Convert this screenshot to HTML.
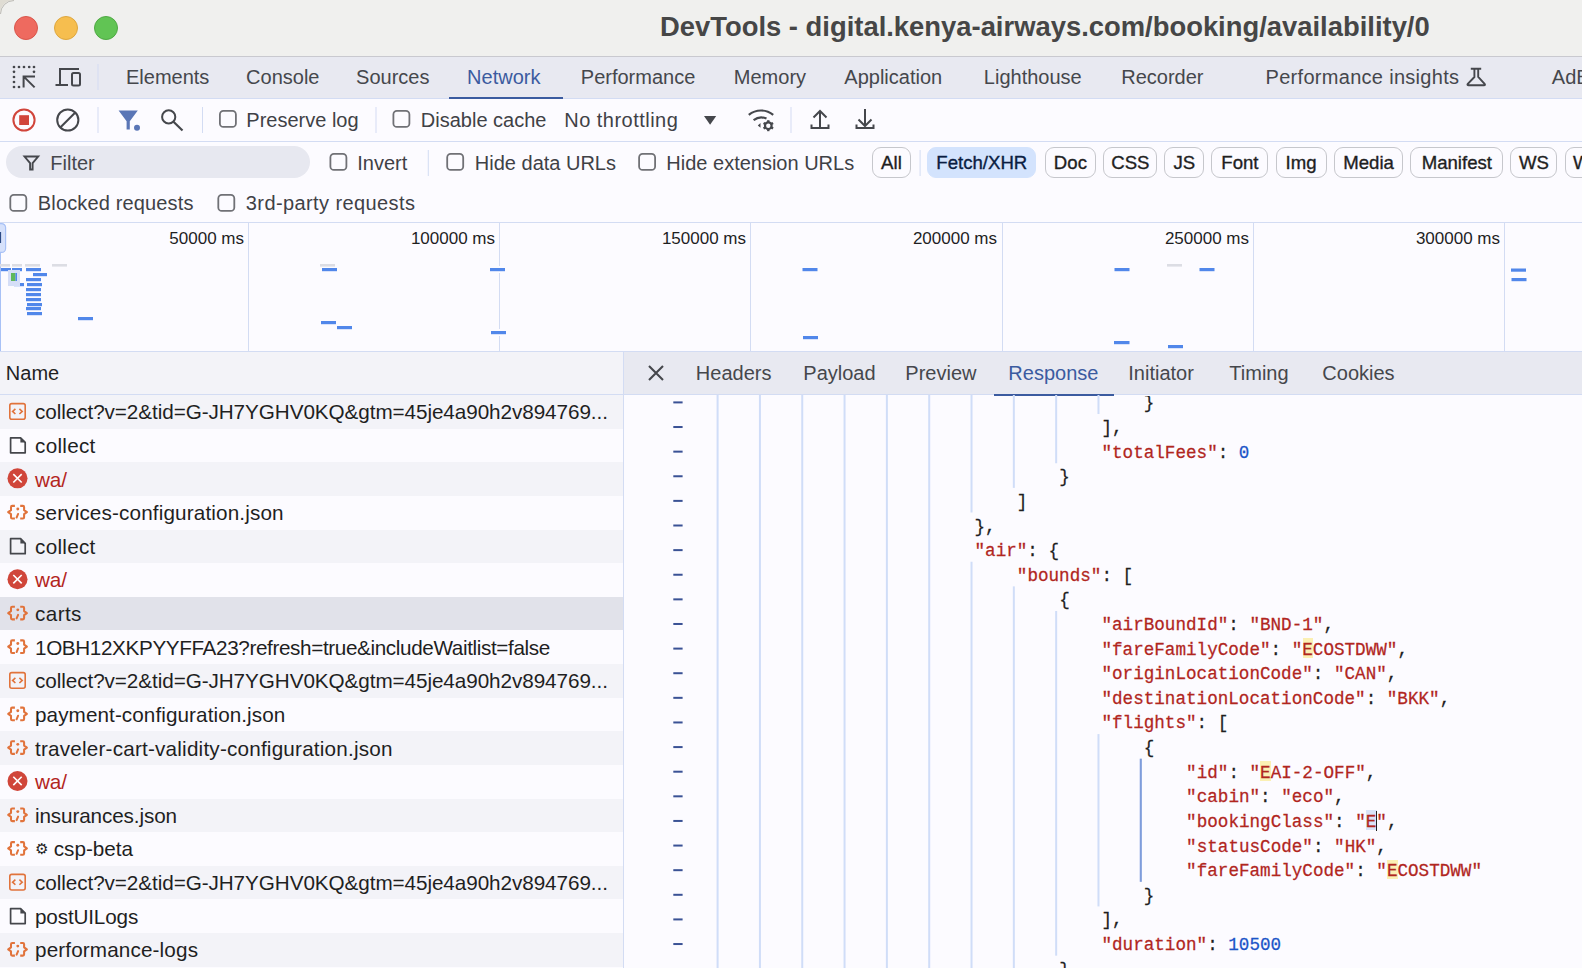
<!DOCTYPE html>
<html><head><meta charset="utf-8">
<style>
*{box-sizing:border-box;margin:0;padding:0}
html,body{width:1582px;height:968px;overflow:hidden;background:#fcfbff;font-family:"Liberation Sans",sans-serif;color:#1f1f1f;position:relative}
.a{position:absolute;white-space:nowrap}
.t{position:absolute;white-space:nowrap;font-size:20px;line-height:22px;color:#3f4146;margin-left:-1.2px}
.tab{position:absolute;top:66px;font-size:20px;line-height:22px;color:#45474c;white-space:nowrap;margin-left:-1.2px}
.pill{position:absolute;top:147px;height:31px;border:1px solid #c6c7cc;border-radius:9px;font-size:18.6px;line-height:29px;text-align:center;color:#1f1f1f;-webkit-text-stroke:0.35px #1f1f1f}
.ms{position:absolute;top:229.2px;font-size:17px;line-height:20px;color:#1f1f1f;white-space:nowrap}
.nm{position:absolute;left:35px;font-size:20.7px;line-height:22px;color:#1f1f1f;white-space:nowrap}
.ln{position:absolute;font-family:"Liberation Mono",monospace;font-size:17.63px;line-height:24px;white-space:pre;color:#1f1f1f;transform:scaleY(1.08);transform-origin:0 16.7px;-webkit-text-stroke:0.25px currentColor}
.k{color:#b1261e}
.n{color:#1b55c8}
svg{position:absolute;left:0;top:0}
</style></head><body>
<div class="a" style="left:0px;top:0px;width:1582px;height:56px;background:#f0f0ee;"></div>
<div class="a" style="left:0px;top:56px;width:1582px;height:1px;background:#c9c9cf;"></div>
<div class="a" style="left:0px;top:57px;width:1582px;height:41px;background:#e8e9f1;"></div>
<div class="a" style="left:0px;top:98px;width:1582px;height:1px;background:#d3dcf3;"></div>
<div class="a" style="left:0px;top:141px;width:1582px;height:1px;background:#d3dcf3;"></div>
<div class="a" style="left:0px;top:222px;width:1582px;height:1px;background:#d3dcf3;"></div>
<div class="a" style="left:0px;top:351px;width:1582px;height:1px;background:#d3dcf3;"></div>
<div class="a" style="left:0px;top:352px;width:623px;height:42px;background:#f3f3f8;"></div>
<div class="a" style="left:0px;top:394px;width:623px;height:1px;background:#d3dcf3;"></div>
<div class="a" style="left:624px;top:352px;width:958px;height:42px;background:#e8e9f1;"></div>
<div class="a" style="left:624px;top:394px;width:958px;height:1px;background:#d3dcf3;"></div>
<div class="a" style="left:623px;top:352px;width:1px;height:616px;background:#d3dcf3;"></div>
<div class="a" style="left:0px;top:395.0px;width:623px;height:33.62px;background:#f3f3f8;"></div>
<div class="nm" style="top:401.30px;color:#1f1f1f;letter-spacing:-0.073px">collect?v=2&amp;tid=G-JH7YGHV0KQ&amp;gtm=45je4a90h2v894769...</div>
<div class="a" style="left:0px;top:428.62px;width:623px;height:33.62px;background:#fcfbff;"></div>
<div class="nm" style="top:434.93px;color:#1f1f1f;letter-spacing:0.283px">collect</div>
<div class="a" style="left:0px;top:462.25px;width:623px;height:33.62px;background:#f3f3f8;"></div>
<div class="nm" style="top:468.55px;color:#b3261e;letter-spacing:-0.150px">wa/</div>
<div class="a" style="left:0px;top:495.88px;width:623px;height:33.62px;background:#fcfbff;"></div>
<div class="nm" style="top:502.18px;color:#1f1f1f;letter-spacing:0.142px">services-configuration.json</div>
<div class="a" style="left:0px;top:529.5px;width:623px;height:33.62px;background:#f3f3f8;"></div>
<div class="nm" style="top:535.80px;color:#1f1f1f;letter-spacing:0.283px">collect</div>
<div class="a" style="left:0px;top:563.12px;width:623px;height:33.62px;background:#fcfbff;"></div>
<div class="nm" style="top:569.42px;color:#b3261e;letter-spacing:-0.150px">wa/</div>
<div class="a" style="left:0px;top:596.75px;width:623px;height:33.62px;background:#e1e2ea;"></div>
<div class="nm" style="top:603.05px;color:#1f1f1f;letter-spacing:0.400px">carts</div>
<div class="a" style="left:0px;top:630.38px;width:623px;height:33.62px;background:#fcfbff;"></div>
<div class="nm" style="top:636.67px;color:#1f1f1f;letter-spacing:-0.374px">1OBH12XKPYYFFA23?refresh=true&amp;includeWaitlist=false</div>
<div class="a" style="left:0px;top:664.0px;width:623px;height:33.62px;background:#f3f3f8;"></div>
<div class="nm" style="top:670.30px;color:#1f1f1f;letter-spacing:-0.073px">collect?v=2&amp;tid=G-JH7YGHV0KQ&amp;gtm=45je4a90h2v894769...</div>
<div class="a" style="left:0px;top:697.62px;width:623px;height:33.62px;background:#fcfbff;"></div>
<div class="nm" style="top:703.92px;color:#1f1f1f;letter-spacing:0.076px">payment-configuration.json</div>
<div class="a" style="left:0px;top:731.25px;width:623px;height:33.62px;background:#f3f3f8;"></div>
<div class="nm" style="top:737.55px;color:#1f1f1f;letter-spacing:0.200px">traveler-cart-validity-configuration.json</div>
<div class="a" style="left:0px;top:764.88px;width:623px;height:33.62px;background:#fcfbff;"></div>
<div class="nm" style="top:771.17px;color:#b3261e;letter-spacing:-0.150px">wa/</div>
<div class="a" style="left:0px;top:798.5px;width:623px;height:33.62px;background:#f3f3f8;"></div>
<div class="nm" style="top:804.80px;color:#1f1f1f;letter-spacing:-0.121px">insurances.json</div>
<div class="a" style="left:0px;top:832.12px;width:623px;height:33.62px;background:#fcfbff;"></div>
<div class="nm" style="top:838.42px;color:#1f1f1f;letter-spacing:0.000px"><span style="font-size:15px;position:relative;top:-2px">&#9881;</span> csp-beta</div>
<div class="a" style="left:0px;top:865.75px;width:623px;height:33.62px;background:#f3f3f8;"></div>
<div class="nm" style="top:872.05px;color:#1f1f1f;letter-spacing:-0.073px">collect?v=2&amp;tid=G-JH7YGHV0KQ&amp;gtm=45je4a90h2v894769...</div>
<div class="a" style="left:0px;top:899.38px;width:623px;height:33.62px;background:#fcfbff;"></div>
<div class="nm" style="top:905.67px;color:#1f1f1f;letter-spacing:-0.156px">postUILogs</div>
<div class="a" style="left:0px;top:933.0px;width:623px;height:33.62px;background:#f3f3f8;"></div>
<div class="nm" style="top:939.30px;color:#1f1f1f;letter-spacing:0.133px">performance-logs</div>
<div class="a" style="left:14px;top:16px;width:24px;height:24px;border-radius:50%;background:#ee6a5f;border:1px solid #d9564b"></div>
<div class="a" style="left:54px;top:16px;width:24px;height:24px;border-radius:50%;background:#f6be4f;border:1px solid #dea73f"></div>
<div class="a" style="left:94px;top:16px;width:24px;height:24px;border-radius:50%;background:#61c454;border:1px solid #4fa944"></div>
<div class="a" style="left:660px;top:11px;font-size:27.4px;line-height:32px;font-weight:bold;color:#464646">DevTools - digital.kenya-airways.com/booking/availability/0</div>
<div class="tab" style="left:127.2px">Elements</div>
<div class="tab" style="left:247.3px">Console</div>
<div class="tab" style="left:357.3px">Sources</div>
<div class="tab" style="left:468.3px;color:#3b5ba0">Network</div>
<div class="tab" style="left:582.0px">Performance</div>
<div class="tab" style="left:735.0px">Memory</div>
<div class="tab" style="left:845.5px">Application</div>
<div class="tab" style="left:985.0px">Lighthouse</div>
<div class="tab" style="left:1122.4px">Recorder</div>
<div class="tab" style="left:1266.7px;letter-spacing:0.3px">Performance insights</div>
<div class="tab" style="left:1553.0px">AdB</div>
<div class="a" style="left:449px;top:96.8px;width:114px;height:2.2px;background:#3b5ba0;"></div>
<div class="t" style="left:247.5px;top:108.5px">Preserve log</div>
<div class="t" style="left:422px;top:108.5px">Disable cache</div>
<div class="t" style="left:565.5px;top:108.5px;letter-spacing:0.47px">No throttling</div>
<div class="a" style="left:6px;top:146px;width:304px;height:32px;border-radius:16px;background:#e7e8f0"></div>
<div class="t" style="left:51.5px;top:151.5px;color:#45474c">Filter</div>
<div class="t" style="left:358.5px;top:151.5px">Invert</div>
<div class="t" style="left:476px;top:151.5px">Hide data URLs</div>
<div class="t" style="left:667.5px;top:151.5px">Hide extension URLs</div>
<div class="pill" style="left:871.6px;width:39.7px">All</div>
<div class="pill" style="left:927.2px;width:109.2px;background:#d3e3fd;border-color:#d3e3fd;color:#0a1d42;-webkit-text-stroke-color:#0a1d42">Fetch/XHR</div>
<div class="pill" style="left:1044.5px;width:51.8px">Doc</div>
<div class="pill" style="left:1103.4px;width:53.9px">CSS</div>
<div class="pill" style="left:1164.3px;width:40.0px">JS</div>
<div class="pill" style="left:1211.3px;width:57.2px">Font</div>
<div class="pill" style="left:1275.6px;width:51.0px">Img</div>
<div class="pill" style="left:1333.7px;width:69.8px">Media</div>
<div class="pill" style="left:1410.3px;width:93.1px">Manifest</div>
<div class="pill" style="left:1510.4px;width:47.1px">WS</div>
<div class="pill" style="left:1564.6px;width:135.4px">WebAssembly</div>
<div class="t" style="left:39px;top:191.5px;letter-spacing:0.15px">Blocked requests</div>
<div class="t" style="left:247px;top:191.5px;letter-spacing:0.4px">3rd-party requests</div>
<div class="a" style="left:248px;top:223px;width:1px;height:128px;background:#d3dcf3;"></div>
<div class="ms" style="right:1338.0px">50000 ms</div>
<div class="a" style="left:499px;top:223px;width:1px;height:128px;background:#d3dcf3;"></div>
<div class="ms" style="right:1087.0px">100000 ms</div>
<div class="a" style="left:750px;top:223px;width:1px;height:128px;background:#d3dcf3;"></div>
<div class="ms" style="right:836.0px">150000 ms</div>
<div class="a" style="left:1002px;top:223px;width:1px;height:128px;background:#d3dcf3;"></div>
<div class="ms" style="right:585.0px">200000 ms</div>
<div class="a" style="left:1253px;top:223px;width:1px;height:128px;background:#d3dcf3;"></div>
<div class="ms" style="right:333.0px">250000 ms</div>
<div class="a" style="left:1504px;top:223px;width:1px;height:128px;background:#d3dcf3;"></div>
<div class="ms" style="right:82.0px">300000 ms</div>
<div class="tab" style="top:361.5px;left:697.0px">Headers</div>
<div class="tab" style="top:361.5px;left:804.5px">Payload</div>
<div class="tab" style="top:361.5px;left:906.5px">Preview</div>
<div class="tab" style="top:361.5px;left:1009.5px;color:#3b5ba0">Response</div>
<div class="tab" style="top:361.5px;left:1129.5px">Initiator</div>
<div class="tab" style="top:361.5px;left:1230.5px">Timing</div>
<div class="tab" style="top:361.5px;left:1323.5px">Cookies</div>
<div class="a" style="left:994px;top:393.8px;width:120px;height:2.2px;background:#3b5ba0;"></div>
<div class="t" style="left:7px;top:361.5px;color:#1f1f1f">Name</div>
<div class="a" style="left:624px;top:396px;width:958px;height:572px;overflow:hidden">
<div class="a" style="left:678.50px;top:242.10px;width:10.58px;height:19.8px;background:#fbf0b4"></div>
<div class="a" style="left:636.18px;top:365.20px;width:10.58px;height:19.8px;background:#fbf0b4"></div>
<div class="a" style="left:741.98px;top:414.44px;width:10.58px;height:19.8px;background:#d9e3f8"></div>
<div class="a" style="left:751.96px;top:414.84px;width:1.4px;height:20px;background:#1f1f1f;z-index:5"></div>
<div class="a" style="left:763.14px;top:463.68px;width:10.58px;height:19.8px;background:#fbf0b4"></div>
<div class="ln" style="left:519.80px;top:-4.60px">}</div>
<div class="ln" style="left:477.48px;top:20.02px">],</div>
<div class="ln" style="left:477.48px;top:44.64px"><span class="k">&quot;totalFees&quot;</span>: <span class="n">0</span></div>
<div class="ln" style="left:435.16px;top:69.26px">}</div>
<div class="ln" style="left:392.84px;top:93.88px">]</div>
<div class="ln" style="left:350.52px;top:118.50px">},</div>
<div class="ln" style="left:350.52px;top:143.12px"><span class="k">&quot;air&quot;</span>: {</div>
<div class="ln" style="left:392.84px;top:167.74px"><span class="k">&quot;bounds&quot;</span>: [</div>
<div class="ln" style="left:435.16px;top:192.36px">{</div>
<div class="ln" style="left:477.48px;top:216.98px"><span class="k">&quot;airBoundId&quot;</span>: <span class="k">&quot;BND-1&quot;</span>,</div>
<div class="ln" style="left:477.48px;top:241.60px"><span class="k">&quot;fareFamilyCode&quot;</span>: <span class="k">&quot;ECOSTDWW&quot;</span>,</div>
<div class="ln" style="left:477.48px;top:266.22px"><span class="k">&quot;originLocationCode&quot;</span>: <span class="k">&quot;CAN&quot;</span>,</div>
<div class="ln" style="left:477.48px;top:290.84px"><span class="k">&quot;destinationLocationCode&quot;</span>: <span class="k">&quot;BKK&quot;</span>,</div>
<div class="ln" style="left:477.48px;top:315.46px"><span class="k">&quot;flights&quot;</span>: [</div>
<div class="ln" style="left:519.80px;top:340.08px">{</div>
<div class="ln" style="left:562.12px;top:364.70px"><span class="k">&quot;id&quot;</span>: <span class="k">&quot;EAI-2-OFF&quot;</span>,</div>
<div class="ln" style="left:562.12px;top:389.32px"><span class="k">&quot;cabin&quot;</span>: <span class="k">&quot;eco&quot;</span>,</div>
<div class="ln" style="left:562.12px;top:413.94px"><span class="k">&quot;bookingClass&quot;</span>: <span class="k">&quot;E&quot;</span>,</div>
<div class="ln" style="left:562.12px;top:438.56px"><span class="k">&quot;statusCode&quot;</span>: <span class="k">&quot;HK&quot;</span>,</div>
<div class="ln" style="left:562.12px;top:463.18px"><span class="k">&quot;fareFamilyCode&quot;</span>: <span class="k">&quot;ECOSTDWW&quot;</span></div>
<div class="ln" style="left:519.80px;top:487.80px">}</div>
<div class="ln" style="left:477.48px;top:512.42px">],</div>
<div class="ln" style="left:477.48px;top:537.04px"><span class="k">&quot;duration&quot;</span>: <span class="n">10500</span></div>
<div class="ln" style="left:435.16px;top:561.66px">}</div>
</div>
<svg width="1582" height="968" viewBox="0 0 1582 968" style="pointer-events:none"><g fill="#45474c"><circle cx="14" cy="67" r="1.35"/><circle cx="19" cy="67" r="1.35"/><circle cx="24" cy="67" r="1.35"/><circle cx="29.2" cy="67" r="1.35"/><circle cx="34" cy="67" r="1.35"/><circle cx="34" cy="71.8" r="1.35"/><circle cx="14" cy="71.8" r="1.35"/><circle cx="14" cy="77" r="1.35"/><circle cx="14" cy="82" r="1.35"/><circle cx="14" cy="87" r="1.35"/><circle cx="19" cy="87" r="1.35"/></g><path d="M23.6 87.5V76.4H35M24.3 77.1L34.6 87.4" fill="none" stroke="#45474c" stroke-width="2"/><path d="M79 69H60V85M55.5 85H68" fill="none" stroke="#45474c" stroke-width="2"/><rect x="72" y="73" width="8" height="12.5" rx="1.5" fill="none" stroke="#45474c" stroke-width="2"/><rect x="97.5" y="64" width="1" height="26" fill="#d3dcf3"/><rect x="97.5" y="107" width="1" height="26" fill="#d3dcf3"/><rect x="202" y="107" width="1" height="26" fill="#d3dcf3"/><rect x="375.5" y="107" width="1" height="26" fill="#d3dcf3"/><rect x="790.5" y="107" width="1" height="26" fill="#d3dcf3"/><rect x="427.8" y="150" width="1" height="26" fill="#d3dcf3"/><rect x="919.6" y="150" width="1" height="26" fill="#d3dcf3"/><circle cx="24" cy="120" r="10.6" fill="none" stroke="#d1453b" stroke-width="2"/><rect x="19.2" y="115.2" width="9.8" height="9.8" fill="#d1453b"/><circle cx="67.8" cy="120" r="10.6" fill="none" stroke="#45474c" stroke-width="2"/><path d="M75.3 112.5L60.3 127.5" stroke="#45474c" stroke-width="2"/><path d="M118.6 110.4H137.8L129.8 121.3V129.4H126.6V121.3Z" fill="#5a76b6"/><circle cx="137" cy="127.8" r="3" fill="#5a76b6"/><circle cx="168.7" cy="116.9" r="6.6" fill="none" stroke="#45474c" stroke-width="2"/><path d="M173.5 121.7L182.5 130.5" stroke="#45474c" stroke-width="2.2"/><rect x="219.9" y="110.9" width="16" height="16" rx="3.5" fill="none" stroke="#707176" stroke-width="1.8"/><rect x="393.4" y="110.9" width="16" height="16" rx="3.5" fill="none" stroke="#707176" stroke-width="1.8"/><rect x="330.4" y="153.9" width="16" height="16" rx="3.5" fill="none" stroke="#707176" stroke-width="1.8"/><rect x="447.2" y="153.9" width="16" height="16" rx="3.5" fill="none" stroke="#707176" stroke-width="1.8"/><rect x="639.1" y="153.9" width="16" height="16" rx="3.5" fill="none" stroke="#707176" stroke-width="1.8"/><rect x="10.3" y="194.9" width="16" height="16" rx="3.5" fill="none" stroke="#707176" stroke-width="1.8"/><rect x="218.3" y="194.9" width="16" height="16" rx="3.5" fill="none" stroke="#707176" stroke-width="1.8"/><path d="M704 116H716.2L710.1 124.8Z" fill="#45474c"/><path d="M748.8 114.8A19.4 19.4 0 0 1 773.2 114.8M753.6 120.2A12.9 12.9 0 0 1 766.5 118.6" fill="none" stroke="#45474c" stroke-width="2.2"/><path d="M760.5 123L757.8 125.4L760.5 127.8Z" fill="#45474c"/><circle cx="768.3" cy="125.7" r="3.3" fill="none" stroke="#45474c" stroke-width="2.2"/><rect x="767.1" y="120.2" width="2.4" height="2.2" fill="#45474c" transform="rotate(0 768.3 125.7)"/><rect x="767.1" y="120.2" width="2.4" height="2.2" fill="#45474c" transform="rotate(60 768.3 125.7)"/><rect x="767.1" y="120.2" width="2.4" height="2.2" fill="#45474c" transform="rotate(120 768.3 125.7)"/><rect x="767.1" y="120.2" width="2.4" height="2.2" fill="#45474c" transform="rotate(180 768.3 125.7)"/><rect x="767.1" y="120.2" width="2.4" height="2.2" fill="#45474c" transform="rotate(240 768.3 125.7)"/><rect x="767.1" y="120.2" width="2.4" height="2.2" fill="#45474c" transform="rotate(300 768.3 125.7)"/><path d="M820 129V111M813.5 117.5L820 111L826.5 117.5M811.5 124.5V128H828.5V124.5" fill="none" stroke="#45474c" stroke-width="2"/><path d="M865 109V126M858.5 119.5L865 126L871.5 119.5M856.5 124.5V128H873.5V124.5" fill="none" stroke="#45474c" stroke-width="2"/><path d="M24.5 156.5H38.2L32.6 163.2V169.5H30.1V163.2Z" fill="none" stroke="#45474c" stroke-width="1.9" stroke-linejoin="miter"/><path d="M1470.8 68.8H1481.2M1474.4 69V77L1467.6 84.2Q1467 85.2 1468.5 85.2H1484Q1485.5 85.2 1484.8 84.2L1478.2 77V69" fill="none" stroke="#45474c" stroke-width="1.9"/><path d="M649 366L663 380M663 366L649 380" stroke="#45474c" stroke-width="2.1"/><rect x="0" y="223" width="1" height="128" fill="#a8c1f6"/><rect x="-8" y="223.6" width="13.6" height="28.8" rx="4" fill="#d6e1fb" stroke="#a8c1f6" stroke-width="1.2"/><rect x="0" y="232" width="1.1" height="11" fill="#2c4a85"/><rect x="320" y="266" width="19" height="7" fill="#fcfbff"/><rect x="319" y="319" width="19" height="7" fill="#fcfbff"/><rect x="335" y="324" width="19" height="7" fill="#fcfbff"/><rect x="488" y="266" width="19" height="7" fill="#fcfbff"/><rect x="489" y="329" width="19" height="7" fill="#fcfbff"/><rect x="800.5" y="266" width="19" height="7" fill="#fcfbff"/><rect x="801" y="334" width="19" height="7" fill="#fcfbff"/><rect x="1112.5" y="266" width="19" height="7" fill="#fcfbff"/><rect x="1112" y="339" width="19.5" height="7" fill="#fcfbff"/><rect x="1197.5" y="266" width="19" height="7" fill="#fcfbff"/><rect x="1166" y="343" width="19" height="7" fill="#fcfbff"/><rect x="1509" y="266.5" width="19" height="7" fill="#fcfbff"/><rect x="1509.5" y="276" width="19" height="7" fill="#fcfbff"/><rect x="1" y="268" width="10" height="3.2" fill="#5187ea"/><rect x="12" y="268" width="10" height="3.2" fill="#5187ea"/><rect x="26" y="268" width="15" height="3.2" fill="#5187ea"/><rect x="33" y="273" width="14" height="3.2" fill="#5187ea"/><rect x="26" y="278" width="15" height="3.2" fill="#5187ea"/><rect x="27" y="283" width="15" height="3.2" fill="#5187ea"/><rect x="14" y="283" width="10" height="3.2" fill="#5187ea"/><rect x="26" y="288" width="15" height="3.2" fill="#5187ea"/><rect x="26" y="293" width="15" height="3.2" fill="#5187ea"/><rect x="26" y="298" width="15" height="3.2" fill="#5187ea"/><rect x="27" y="303" width="15" height="3.2" fill="#5187ea"/><rect x="26" y="307" width="15" height="3.2" fill="#5187ea"/><rect x="27" y="312" width="15" height="3.2" fill="#5187ea"/><rect x="78" y="317" width="15" height="3.2" fill="#5187ea"/><rect x="322" y="268" width="15" height="3.2" fill="#5187ea"/><rect x="321" y="321" width="15" height="3.2" fill="#5187ea"/><rect x="337" y="326" width="15" height="3.2" fill="#5187ea"/><rect x="490" y="268" width="15" height="3.2" fill="#5187ea"/><rect x="491" y="331" width="15" height="3.2" fill="#5187ea"/><rect x="802.5" y="268" width="15" height="3.2" fill="#5187ea"/><rect x="803" y="336" width="15" height="3.2" fill="#5187ea"/><rect x="1114.5" y="268" width="15" height="3.2" fill="#5187ea"/><rect x="1114" y="341" width="15.5" height="3.2" fill="#5187ea"/><rect x="1199.5" y="268" width="15" height="3.2" fill="#5187ea"/><rect x="1168" y="345" width="15" height="3.2" fill="#5187ea"/><rect x="1511" y="268.5" width="15" height="3.2" fill="#5187ea"/><rect x="1511.5" y="278" width="15" height="3.2" fill="#5187ea"/><rect x="0" y="264" width="10" height="2.6" fill="#dcdde4"/><rect x="12" y="264" width="10" height="2.6" fill="#dcdde4"/><rect x="25" y="264" width="15" height="2.6" fill="#dcdde4"/><rect x="52" y="264" width="15" height="2.6" fill="#dcdde4"/><rect x="320" y="264" width="15" height="2.6" fill="#dcdde4"/><rect x="1167" y="264" width="15" height="2.6" fill="#dcdde4"/><rect x="8" y="270" width="12" height="16" fill="#d5def7"/><rect x="11" y="273" width="4.5" height="8" fill="#5fb85b"/><rect x="15.5" y="273" width="1.5" height="8" fill="#5187ea"/><rect x="9.8" y="403.60" width="15.4" height="15.6" rx="2" fill="none" stroke="#e1733b" stroke-width="1.6"/><path d="M15.4 408.80L12.6 411.40L15.4 414.00M19.4 408.80L22.2 411.40L19.4 414.00" fill="none" stroke="#e1733b" stroke-width="1.6"/><path d="M10.6 437.82H20.6L25.2 442.43V452.82H10.6Z" fill="none" stroke="#45474c" stroke-width="1.7" stroke-linejoin="round"/><path d="M20.4 437.62L25.4 442.62H20.4Z" fill="#45474c"/><circle cx="17.5" cy="478.35" r="10" fill="#d0463a"/><path d="M13.3 474.15L21.7 482.55M21.7 474.15L13.3 482.55" stroke="#fff" stroke-width="1.6"/><path d="M14.9 505.87H12.2Q11 505.87 11 507.17V510.17L8.2 512.17L11 514.17V517.17Q11 518.47 12.2 518.47H14.9" fill="none" stroke="#e1733b" stroke-width="2.05" stroke-linejoin="round"/><path d="M20.2 505.87H22.9Q24.1 505.87 24.1 507.17V510.17L26.9 512.17L24.1 514.17V517.17Q24.1 518.47 22.9 518.47H20.2" fill="none" stroke="#e1733b" stroke-width="2.05" stroke-linejoin="round"/><circle cx="17.8" cy="508.97" r="1.45" fill="#e1733b"/><path d="M18.1 513.97L16.6 517.57" stroke="#e1733b" stroke-width="2" stroke-linecap="round"/><path d="M10.6 538.70H20.6L25.2 543.30V553.70H10.6Z" fill="none" stroke="#45474c" stroke-width="1.7" stroke-linejoin="round"/><path d="M20.4 538.50L25.4 543.50H20.4Z" fill="#45474c"/><circle cx="17.5" cy="579.23" r="10" fill="#d0463a"/><path d="M13.3 575.02L21.7 583.42M21.7 575.02L13.3 583.42" stroke="#fff" stroke-width="1.6"/><path d="M14.9 606.75H12.2Q11 606.75 11 608.05V611.05L8.2 613.05L11 615.05V618.05Q11 619.35 12.2 619.35H14.9" fill="none" stroke="#e1733b" stroke-width="2.05" stroke-linejoin="round"/><path d="M20.2 606.75H22.9Q24.1 606.75 24.1 608.05V611.05L26.9 613.05L24.1 615.05V618.05Q24.1 619.35 22.9 619.35H20.2" fill="none" stroke="#e1733b" stroke-width="2.05" stroke-linejoin="round"/><circle cx="17.8" cy="609.85" r="1.45" fill="#e1733b"/><path d="M18.1 614.85L16.6 618.45" stroke="#e1733b" stroke-width="2" stroke-linecap="round"/><path d="M14.9 640.38H12.2Q11 640.38 11 641.67V644.67L8.2 646.67L11 648.67V651.67Q11 652.97 12.2 652.97H14.9" fill="none" stroke="#e1733b" stroke-width="2.05" stroke-linejoin="round"/><path d="M20.2 640.38H22.9Q24.1 640.38 24.1 641.67V644.67L26.9 646.67L24.1 648.67V651.67Q24.1 652.97 22.9 652.97H20.2" fill="none" stroke="#e1733b" stroke-width="2.05" stroke-linejoin="round"/><circle cx="17.8" cy="643.47" r="1.45" fill="#e1733b"/><path d="M18.1 648.47L16.6 652.07" stroke="#e1733b" stroke-width="2" stroke-linecap="round"/><rect x="9.8" y="672.60" width="15.4" height="15.6" rx="2" fill="none" stroke="#e1733b" stroke-width="1.6"/><path d="M15.4 677.80L12.6 680.40L15.4 683.00M19.4 677.80L22.2 680.40L19.4 683.00" fill="none" stroke="#e1733b" stroke-width="1.6"/><path d="M14.9 707.62H12.2Q11 707.62 11 708.92V711.92L8.2 713.92L11 715.92V718.92Q11 720.22 12.2 720.22H14.9" fill="none" stroke="#e1733b" stroke-width="2.05" stroke-linejoin="round"/><path d="M20.2 707.62H22.9Q24.1 707.62 24.1 708.92V711.92L26.9 713.92L24.1 715.92V718.92Q24.1 720.22 22.9 720.22H20.2" fill="none" stroke="#e1733b" stroke-width="2.05" stroke-linejoin="round"/><circle cx="17.8" cy="710.72" r="1.45" fill="#e1733b"/><path d="M18.1 715.72L16.6 719.32" stroke="#e1733b" stroke-width="2" stroke-linecap="round"/><path d="M14.9 741.25H12.2Q11 741.25 11 742.55V745.55L8.2 747.55L11 749.55V752.55Q11 753.85 12.2 753.85H14.9" fill="none" stroke="#e1733b" stroke-width="2.05" stroke-linejoin="round"/><path d="M20.2 741.25H22.9Q24.1 741.25 24.1 742.55V745.55L26.9 747.55L24.1 749.55V752.55Q24.1 753.85 22.9 753.85H20.2" fill="none" stroke="#e1733b" stroke-width="2.05" stroke-linejoin="round"/><circle cx="17.8" cy="744.35" r="1.45" fill="#e1733b"/><path d="M18.1 749.35L16.6 752.95" stroke="#e1733b" stroke-width="2" stroke-linecap="round"/><circle cx="17.5" cy="780.98" r="10" fill="#d0463a"/><path d="M13.3 776.77L21.7 785.17M21.7 776.77L13.3 785.17" stroke="#fff" stroke-width="1.6"/><path d="M14.9 808.50H12.2Q11 808.50 11 809.80V812.80L8.2 814.80L11 816.80V819.80Q11 821.10 12.2 821.10H14.9" fill="none" stroke="#e1733b" stroke-width="2.05" stroke-linejoin="round"/><path d="M20.2 808.50H22.9Q24.1 808.50 24.1 809.80V812.80L26.9 814.80L24.1 816.80V819.80Q24.1 821.10 22.9 821.10H20.2" fill="none" stroke="#e1733b" stroke-width="2.05" stroke-linejoin="round"/><circle cx="17.8" cy="811.60" r="1.45" fill="#e1733b"/><path d="M18.1 816.60L16.6 820.20" stroke="#e1733b" stroke-width="2" stroke-linecap="round"/><path d="M14.9 842.12H12.2Q11 842.12 11 843.42V846.42L8.2 848.42L11 850.42V853.42Q11 854.72 12.2 854.72H14.9" fill="none" stroke="#e1733b" stroke-width="2.05" stroke-linejoin="round"/><path d="M20.2 842.12H22.9Q24.1 842.12 24.1 843.42V846.42L26.9 848.42L24.1 850.42V853.42Q24.1 854.72 22.9 854.72H20.2" fill="none" stroke="#e1733b" stroke-width="2.05" stroke-linejoin="round"/><circle cx="17.8" cy="845.22" r="1.45" fill="#e1733b"/><path d="M18.1 850.22L16.6 853.82" stroke="#e1733b" stroke-width="2" stroke-linecap="round"/><rect x="9.8" y="874.35" width="15.4" height="15.6" rx="2" fill="none" stroke="#e1733b" stroke-width="1.6"/><path d="M15.4 879.55L12.6 882.15L15.4 884.75M19.4 879.55L22.2 882.15L19.4 884.75" fill="none" stroke="#e1733b" stroke-width="1.6"/><path d="M10.6 908.58H20.6L25.2 913.17V923.58H10.6Z" fill="none" stroke="#45474c" stroke-width="1.7" stroke-linejoin="round"/><path d="M20.4 908.38L25.4 913.38H20.4Z" fill="#45474c"/><path d="M14.9 943.00H12.2Q11 943.00 11 944.30V947.30L8.2 949.30L11 951.30V954.30Q11 955.60 12.2 955.60H14.9" fill="none" stroke="#e1733b" stroke-width="2.05" stroke-linejoin="round"/><path d="M20.2 943.00H22.9Q24.1 943.00 24.1 944.30V947.30L26.9 949.30L24.1 951.30V954.30Q24.1 955.60 22.9 955.60H20.2" fill="none" stroke="#e1733b" stroke-width="2.05" stroke-linejoin="round"/><circle cx="17.8" cy="946.10" r="1.45" fill="#e1733b"/><path d="M18.1 951.10L16.6 954.70" stroke="#e1733b" stroke-width="2" stroke-linecap="round"/><rect x="716.60" y="395.00" width="2" height="573.00" fill="#d0ddf8"/><rect x="758.92" y="395.00" width="2" height="573.00" fill="#d0ddf8"/><rect x="801.24" y="395.00" width="2" height="573.00" fill="#d0ddf8"/><rect x="843.56" y="395.00" width="2" height="573.00" fill="#d0ddf8"/><rect x="885.88" y="395.00" width="2" height="573.00" fill="#d0ddf8"/><rect x="928.20" y="395.00" width="2" height="573.00" fill="#d0ddf8"/><rect x="970.52" y="395.00" width="2" height="117.50" fill="#d0ddf8"/><rect x="970.52" y="561.74" width="2" height="406.26" fill="#d0ddf8"/><rect x="1012.84" y="395.00" width="2" height="92.88" fill="#d0ddf8"/><rect x="1012.84" y="586.36" width="2" height="381.64" fill="#d0ddf8"/><rect x="1055.16" y="395.00" width="2" height="68.26" fill="#d0ddf8"/><rect x="1055.16" y="610.98" width="2" height="344.68" fill="#d0ddf8"/><rect x="1097.48" y="395.00" width="2" height="19.02" fill="#d0ddf8"/><rect x="1097.48" y="734.08" width="2" height="172.34" fill="#d0ddf8"/><rect x="1139.80" y="758.70" width="2" height="123.10" fill="#d0ddf8"/><rect x="1139.80" y="758.70" width="2" height="123.10" fill="#7f9ddb"/><rect x="673.3" y="401.40" width="9.3" height="2" fill="#3a5295"/><rect x="673.3" y="426.02" width="9.3" height="2" fill="#3a5295"/><rect x="673.3" y="450.64" width="9.3" height="2" fill="#3a5295"/><rect x="673.3" y="475.26" width="9.3" height="2" fill="#3a5295"/><rect x="673.3" y="499.88" width="9.3" height="2" fill="#3a5295"/><rect x="673.3" y="524.50" width="9.3" height="2" fill="#3a5295"/><rect x="673.3" y="549.12" width="9.3" height="2" fill="#3a5295"/><rect x="673.3" y="573.74" width="9.3" height="2" fill="#3a5295"/><rect x="673.3" y="598.36" width="9.3" height="2" fill="#3a5295"/><rect x="673.3" y="622.98" width="9.3" height="2" fill="#3a5295"/><rect x="673.3" y="647.60" width="9.3" height="2" fill="#3a5295"/><rect x="673.3" y="672.22" width="9.3" height="2" fill="#3a5295"/><rect x="673.3" y="696.84" width="9.3" height="2" fill="#3a5295"/><rect x="673.3" y="721.46" width="9.3" height="2" fill="#3a5295"/><rect x="673.3" y="746.08" width="9.3" height="2" fill="#3a5295"/><rect x="673.3" y="770.70" width="9.3" height="2" fill="#3a5295"/><rect x="673.3" y="795.32" width="9.3" height="2" fill="#3a5295"/><rect x="673.3" y="819.94" width="9.3" height="2" fill="#3a5295"/><rect x="673.3" y="844.56" width="9.3" height="2" fill="#3a5295"/><rect x="673.3" y="869.18" width="9.3" height="2" fill="#3a5295"/><rect x="673.3" y="893.80" width="9.3" height="2" fill="#3a5295"/><rect x="673.3" y="918.42" width="9.3" height="2" fill="#3a5295"/><rect x="673.3" y="943.04" width="9.3" height="2" fill="#3a5295"/><path d="M0 0H14A14 14 0 0 0 0 14Z" fill="#dfdcd3"/><path d="M14 0.5A13.5 13.5 0 0 0 0.5 14" fill="none" stroke="#bcbab4" stroke-width="1"/></svg>
</body></html>
